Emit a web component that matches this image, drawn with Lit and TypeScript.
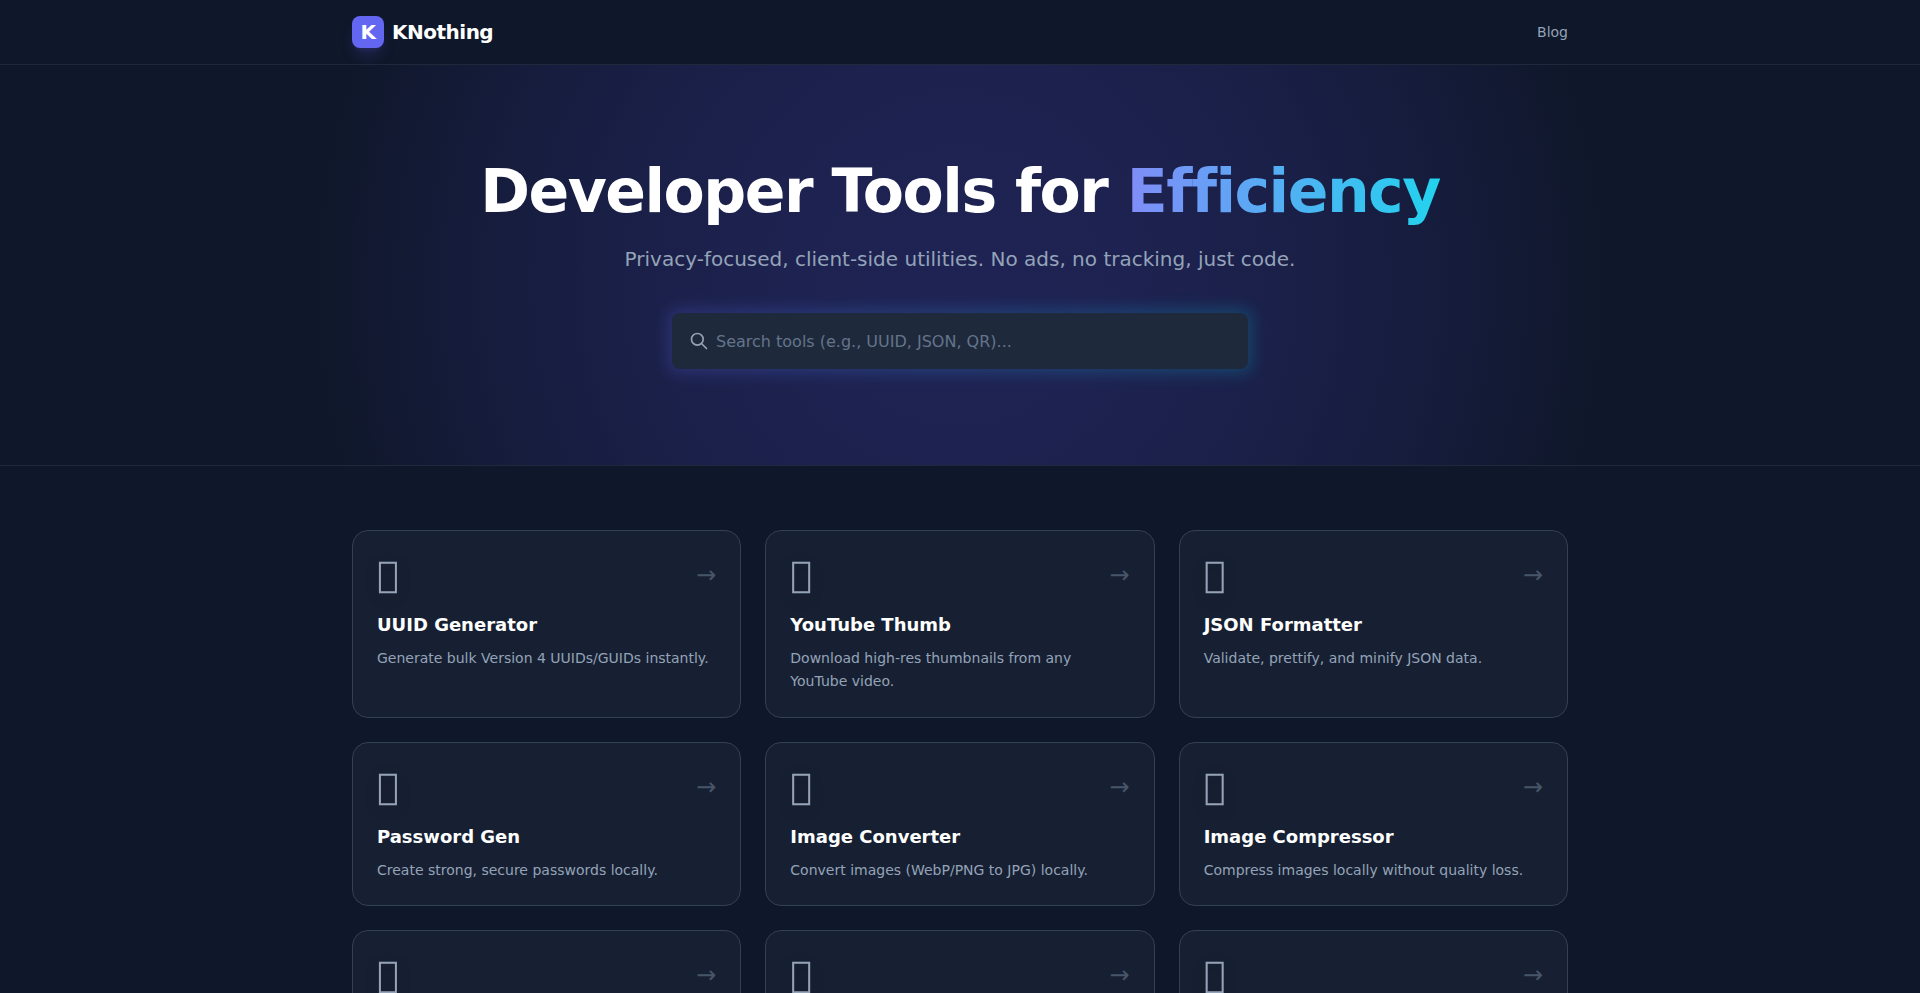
import { LitElement, html, css } from "lit";
import { customElement } from "lit/decorators.js";

const tools = [
  ["\uE000", "UUID Generator", "Generate bulk Version 4 UUIDs/GUIDs instantly."],
  ["\uE000", "YouTube Thumb", "Download high-res thumbnails from any YouTube video."],
  ["\uE000", "JSON Formatter", "Validate, prettify, and minify JSON data."],
  ["\uE000", "Password Gen", "Create strong, secure passwords locally."],
  ["\uE000", "Image Converter", "Convert images (WebP/PNG to JPG) locally."],
  ["\uE000", "Image Compressor", "Compress images locally without quality loss."],
  ["\uE000", "QR Code Generator", "Create QR codes for links and text."],
  ["\uE000", "Base64 Encoder", "Encode and decode Base64 strings."],
  ["\uE000", "Color Picker", "Pick and convert colors between formats."],
];

@customElement("app-root")
export class AppRoot extends LitElement {
  static styles = css`
    :host {
      display: block;
      min-height: 993px;
      background: #0f172a;
      color: #fff;
      font-family: "DejaVu Sans", sans-serif;
    }
    .nav {
      height: 64px;
      border-bottom: 1px solid #1e293b;
      background: #0f172a;
    }
    .wrap {
      max-width: 1216px;
      margin: 0 auto;
    }
    .nav .wrap {
      height: 100%;
      display: flex;
      align-items: center;
      justify-content: space-between;
    }
    .brand {
      display: flex;
      align-items: center;
      gap: 8px;
      font-size: 20px;
      font-weight: 700;
      letter-spacing: -0.025em;
    }
    .logo {
      width: 32px;
      height: 32px;
      border-radius: 8px;
      background: #6366f1;
      box-shadow: 0 10px 15px -3px rgba(99, 102, 241, 0.2), 0 4px 6px -4px rgba(99, 102, 241, 0.2);
      display: flex;
      align-items: center;
      justify-content: center;
      font-size: 20px;
      font-weight: 700;
    }
    .blog {
      font-size: 14px;
      color: #94a3b8;
    }
    .hero {
      height: 400px;
      border-bottom: 1px solid #1e293b;
      background: radial-gradient(
        circle at 50% 55%,
        rgba(86, 78, 232, 0.22) 0%,
        rgba(86, 78, 232, 0.205) 16%,
        rgba(86, 78, 232, 0.16) 33%,
        rgba(86, 78, 232, 0.09) 50%,
        rgba(86, 78, 232, 0) 66%
      );
      display: flex;
      flex-direction: column;
      align-items: center;
    }
    h1 {
      margin: 96px 0 0;
      font-size: 60px;
      line-height: 60px;
      font-weight: 700;
      letter-spacing: -0.025em;
    }
    .grad {
      background: linear-gradient(to right, #818cf8, #22d3ee);
      -webkit-background-clip: text;
      background-clip: text;
      color: transparent;
    }
    .sub {
      margin: 24px 0 0;
      font-size: 20px;
      line-height: 28px;
      color: #94a3b8;
    }
    .search {
      margin-top: 40px;
      width: 576px;
      position: relative;
    }
    .glow {
      position: absolute;
      inset: -4px;
      border-radius: 8px;
      background: linear-gradient(to right, #6366f1, #06b6d4);
      opacity: 0.25;
      filter: blur(8px);
    }
    .box {
      position: relative;
      height: 56px;
      border-radius: 8px;
      background: #1e293b;
      display: flex;
      align-items: center;
      gap: 7px;
      padding-left: 17px;
      font-size: 16px;
      color: #64748b;
    }
    .box svg {
      width: 20px;
      height: 20px;
      color: #94a3b8;
      flex: none;
    }
    .grid {
      padding-top: 64px;
      display: grid;
      grid-template-columns: repeat(3, minmax(0, 1fr));
      gap: 24px;
    }
    .card {
      background: #172032;
      border: 1px solid #334155;
      border-radius: 16px;
      padding: 24px;
    }
    .top {
      display: flex;
      justify-content: space-between;
      align-items: center;
      margin-bottom: 16px;
    }
    .icon {
      font-size: 36px;
      line-height: 40px;
      color: #94a3b8;
      font-family: "DejaVu Sans";
      filter: drop-shadow(0 4px 6px rgba(0, 0, 0, 0.25));
    }
    .arrow {
      font-size: 24px;
      line-height: 32px;
      color: #475569;
    }
    h3 {
      margin: 0 0 8px;
      font-size: 18px;
      line-height: 28px;
      font-weight: 700;
    }
    .card p {
      margin: 0;
      font-size: 14px;
      line-height: 22.75px;
      color: #94a3b8;
    }
  `;

  render() {
    return html`
      <nav class="nav">
        <div class="wrap">
          <div class="brand"><span class="logo">K</span><span>KNothing</span></div>
          <a class="blog">Blog</a>
        </div>
      </nav>
      <section class="hero">
        <h1>Developer Tools for <span class="grad">Efficiency</span></h1>
        <p class="sub">Privacy-focused, client-side utilities. No ads, no tracking, just code.</p>
        <div class="search">
          <div class="glow"></div>
          <div class="box">
            <svg viewBox="0 0 24 24" fill="none" stroke="currentColor" stroke-width="2" stroke-linecap="round" stroke-linejoin="round">
              <path d="M21 21l-6-6m2-5a7 7 0 11-14 0 7 7 0 0114 0z"></path>
            </svg>
            <span>Search tools (e.g., UUID, JSON, QR)...</span>
          </div>
        </div>
      </section>
      <main class="wrap grid">
        ${tools.map(
          ([i, t, d]) => html`
            <article class="card">
              <div class="top"><span class="icon">${i}</span><span class="arrow">→</span></div>
              <h3>${t}</h3>
              <p>${d}</p>
            </article>
          `
        )}
      </main>
    `;
  }
}
